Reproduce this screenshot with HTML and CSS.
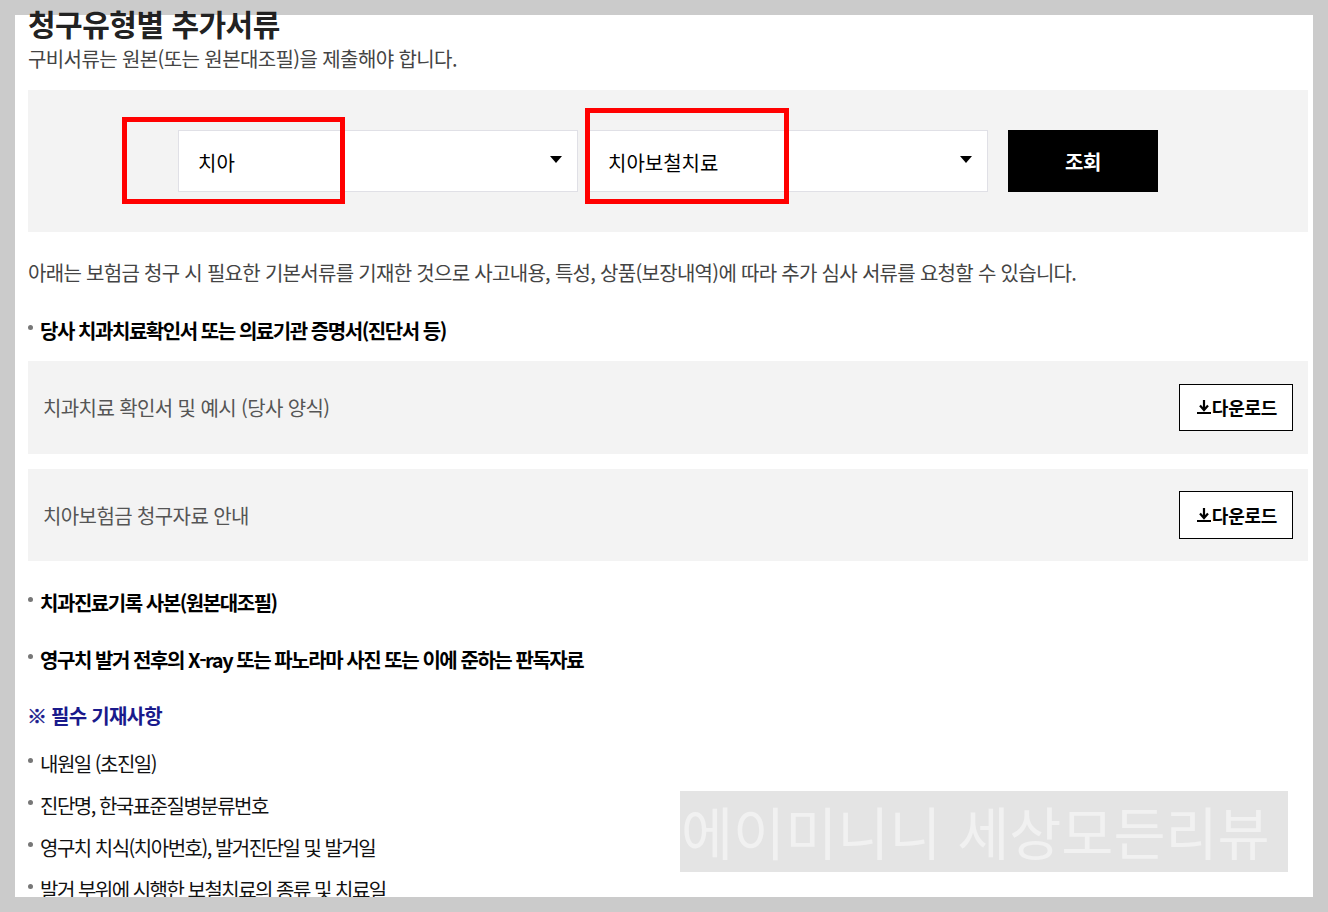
FILE: index.html
```html
<!DOCTYPE html>
<html lang="ko">
<head>
<meta charset="utf-8">
<title>청구유형별 추가서류</title>
<link rel="stylesheet" href="styles.css">
</head>
<body>
<main class="sheet">
  <h1 class="title">청구유형별 추가서류</h1>
  <p class="sub">구비서류는 원본(또는 원본대조필)을 제출해야 합니다.</p>
  <section class="search">
    <div class="select"><span>치아</span><svg class="caret" viewBox="0 0 12 7"><path d="M0 0H12L6 7Z"/></svg></div>
    <div class="select"><span>치아보철치료</span><svg class="caret" viewBox="0 0 12 7"><path d="M0 0H12L6 7Z"/></svg></div>
    <button class="query">조회</button>
  </section>
  <p class="desc">아래는 보험금 청구 시 필요한 기본서류를 기재한 것으로 사고내용, 특성, 상품(보장내역)에 따라 추가 심사 서류를 요청할 수 있습니다.</p>
  <p class="item strong first">당사 치과치료확인서 또는 의료기관 증명서(진단서 등)</p>
  <div class="file">
    <span>치과치료 확인서 및 예시 (당사 양식)</span>
    <a class="down"><svg class="dl" viewBox="0 0 14 14"><path d="M7 0V9M3 5.5L7 10L11 5.5" fill="none" stroke="#000" stroke-width="2.2"/><path d="M0 13H14" stroke="#000" stroke-width="2"/></svg>다운로드</a>
  </div>
  <div class="file second">
    <span>치아보험금 청구자료 안내</span>
    <a class="down"><svg class="dl" viewBox="0 0 14 14"><path d="M7 0V9M3 5.5L7 10L11 5.5" fill="none" stroke="#000" stroke-width="2.2"/><path d="M0 13H14" stroke="#000" stroke-width="2"/></svg>다운로드</a>
  </div>
  <p class="item strong after-files">치과진료기록 사본(원본대조필)</p>
  <p class="item strong next">영구치 발거 전후의 X-ray 또는 파노라마 사진 또는 이에 준하는 판독자료</p>
  <p class="notice"><span class="ref">※</span> 필수 기재사항</p>
  <ul class="facts">
    <li class="item">내원일 (초진일)</li>
    <li class="item">진단명, 한국표준질병분류번호</li>
    <li class="item">영구치 치식(치아번호), 발거진단일 및 발거일</li>
    <li class="item">발거 부위에 시행한 보철치료의 종류 및 치료일</li>
  </ul>
  <div class="mark mark-a"></div>
  <div class="mark mark-b"></div>
  <div class="stamp">에이미니니 세상모든리뷰</div>
</main>
</body>
</html>
```
FILE: styles.css
```css
* { box-sizing: border-box; }
html, body { margin: 0; padding: 0; height: 912px; overflow: hidden; background: #cbcbcb; }
body { padding: 15px 15px 15px; font-family: "Noto Sans CJK KR", "Noto Sans", sans-serif; color: #111; }
.sheet { display: flow-root; position: relative; height: 882px; background: #fff; padding: 0 5px 0 13px; clip-path: inset(-15px 0 0 0); }
.title { margin: -12px 0 1px; font-size: 30px; line-height: 40px; font-weight: 700; color: #222; letter-spacing: -0.5px; }
.sub { margin: 0 0 16px; font-size: 20px; line-height: 30px; color: #444; font-weight: 400; letter-spacing: -0.6px; }
.search { display: flex; justify-content: center; align-items: center; height: 142px; background: #f3f3f3; gap: 10px; }
.select { display: flex; justify-content: space-between; align-items: center; width: 400px; height: 62px; padding: 2px 15px 0 19px; background: #fff; border: 1px solid #e0e0e6; font-size: 20px; color: #000; }
.caret { width: 12px; height: 7px; margin-top: -5px; }
.query { width: 150px; height: 62px; margin-left: 10px; padding: 0; background: #000; color: #fff; border: 0; font: 700 20px "Noto Sans CJK KR", sans-serif; letter-spacing: -0.5px; }
.desc { margin: 26px 0 0; font-size: 20px; line-height: 30px; color: #444; letter-spacing: -0.7px; }
.item { position: relative; margin: 0 0 -2px; padding-left: 12px; font-size: 20px; line-height: 32px; color: #111; letter-spacing: -1.5px; }
.item::before { content: ""; position: absolute; left: 0; top: 10px; width: 5px; height: 5px; border-radius: 50%; background: #777; }
.strong { font-weight: 700; color: #000; letter-spacing: -1.45px; }
.first { margin-top: 27px; }
.file { display: flex; justify-content: space-between; align-items: center; height: 92.5px; margin-top: 16px; padding: 22.5px 15px; background: #f3f3f3; font-size: 20px; color: #555; letter-spacing: -0.6px; }
.second { margin-top: 15px; }
.second span { margin-top: 2px; }
.down { display: flex; align-items: center; justify-content: center; gap: 1px; width: 114px; height: 47.5px; padding-left: 2px; background: #fff; border: 1px solid #000; font-size: 18px; font-weight: 700; color: #000; letter-spacing: -0.2px; }
.second .down { margin-top: 0; }
.dl { width: 14px; height: 14px; }
.after-files { margin-top: 26px; }
.next { margin-top: 27px; }
.notice { margin: 27px 0 0; font-size: 20px; line-height: 30px; font-weight: 700; color: #1a1a8c; letter-spacing: -0.75px; }
.ref { margin-left: -1px; -webkit-text-stroke: 0.5px #1a1a8c; }
.facts { list-style: none; margin: 17px 0 0; padding: 0; display: flex; flex-direction: column; gap: 12px; }
.mark { position: absolute; border: 5px solid #f00; }
.mark-a { left: 107px; top: 101.5px; width: 223px; height: 87px; }
.mark-b { left: 569.5px; top: 93px; width: 204px; height: 96px; }
.stamp { position: absolute; left: 665px; top: 776px; width: 608px; height: 81px; padding-left: 1px; background: #e4e4e4; color: #f1f1f1; font-size: 56.6px; line-height: 78px; font-weight: 400; white-space: nowrap; }
```
